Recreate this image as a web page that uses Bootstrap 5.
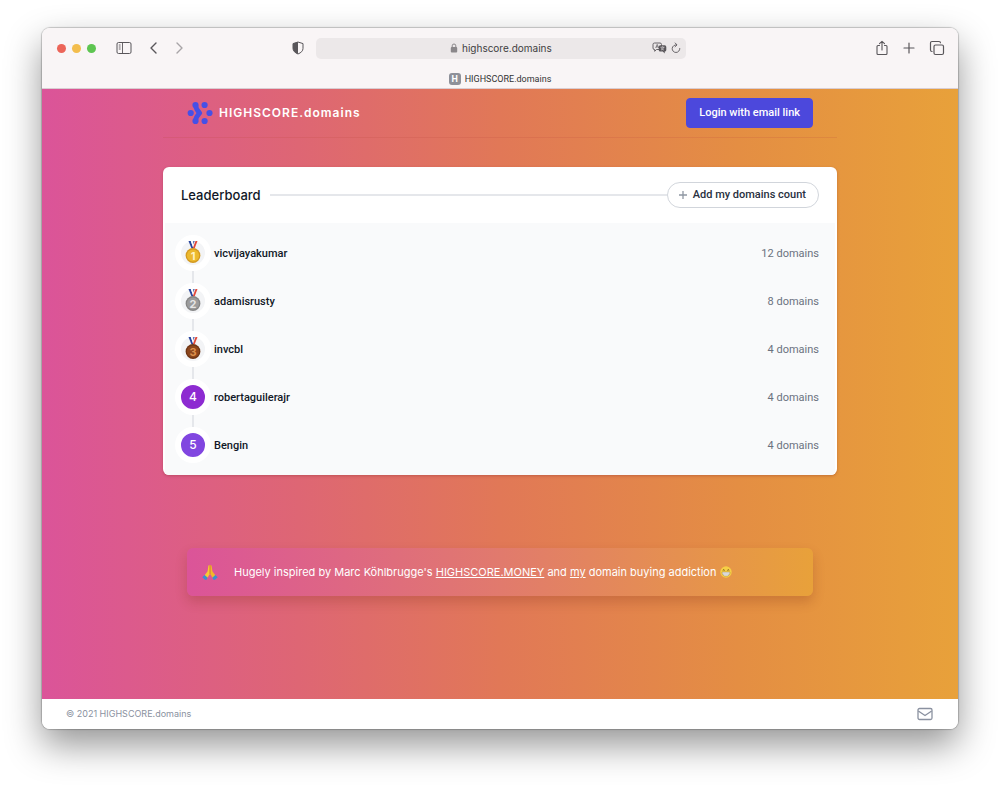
<!DOCTYPE html>
<html lang="en">
<head>
<meta charset="utf-8">
<meta name="viewport" content="width=device-width, initial-scale=1">
<title>HIGHSCORE.domains</title>
<link href="https://cdn.jsdelivr.net/npm/bootstrap@5.3.0/dist/css/bootstrap.min.css" rel="stylesheet">
<style>
  body { font-family: Roboto, "Liberation Sans", sans-serif; font-size: 11px; line-height: 16px; padding: 28px 42px 56px; background: #fff; color: #111827; }
  svg { display: block; flex: none; }
  .browser { border-radius: 8px; box-shadow: 0 0 1px 1px rgba(0,0,0,.2), 0 16px 36px rgba(0,0,0,.42); }
  .chrome { background: #f9f5f6; border-bottom: 1px solid #d9cdd2; color: #59565a; height: 61px; }
  .toolbar { height: 40px; }
  .side { flex: 1 1 0; }
  .side-left { padding-left: 15px; }
  .side-right { padding-right: 13px; }
  .light { width: 9px; height: 9px; border-radius: 50%; margin-right: 6px; }
  .light-red { background: #ec6559; }
  .light-amber { background: #f3bd4d; }
  .light-green { background: #5ec551; }
  .tool { background: none; border: 0; padding: 0; color: inherit; }
  .tool-gap { margin-left: 14px; }
  .address { flex: 0 1 370px; height: 21px; border-radius: 5px; background: #ece8e9; padding: 0 5px; }
  .address input { width: 90px; border: 0; padding: 0; background: none; color: #403e41; font-family: Inter, sans-serif; font-size: 10px; height: 20px; outline: 0; }
  .tab-row { height: 22px; font-size: 9px; color: #333; }
  .favicon { width: 12px; height: 12px; line-height: 12px; border-radius: 3px; background: #8e9099; color: #fff; font-size: 9px; }
  .page-bg { background: linear-gradient(90deg, #db5499 0%, #de6674 28%, #e17857 50%, #e48e43 76%, #e8a13a 100%); }
  .page-col { width: 100%; max-width: 674px; }
  .site-nav { height: 49px; padding: 0 24px; border-bottom: 1px solid rgba(190,70,60,.18); }
  .brand { font-family: Inter, sans-serif; font-size: 12px; font-weight: 600; letter-spacing: 1px; color: #fff; margin-left: 6px; }
  .btn-login { font-size: 11px; line-height: 16px; font-weight: 500; padding: 6px 12px; border-radius: 4px; background: #4c48dc; border: 1px solid #4c48dc; color: #fff; }
  .btn-login:hover { background: #4338ca; color: #fff; }
  .board { margin-top: 29px; border-radius: 6px; background: #fff; box-shadow: 0 1px 3px rgba(120,30,30,.3); }
  .board-head { height: 56px; padding: 0 18px; }
  .board-head h1 { font-family: Inter, sans-serif; font-size: 13px; line-height: 20px; font-weight: 500; }
  .rule { height: 2px; background: #e5e7eb; margin-left: 9px; }
  .btn-add { font-size: 11px; line-height: 16px; font-weight: 500; padding: 4px 12px 4px 9px; border: 1px solid #d1d5db; color: #283040; background: #fff; }
  .ranks { padding: 12px 16px 10px 10px; margin: 0 2px; background: #f9fafb; }
  .rail { width: 36px; }
  .medal { width: 36px; height: 36px; border: 6px solid #fff; border-radius: 50%; background: #f3f4f6; color: #fff; font-weight: 500; font-size: 12px; font-family: Inter, sans-serif; }
  .rank-four { background: #8d2bd1; }
  .rank-five { background: #8146e0; }
  .link-line { width: 2px; height: 12px; background: #e5e7eb; }
  .rank-text { height: 38px; padding-left: 3px; font-weight: 500; }
  .count { color: #6b7280; font-weight: 400; }
  .credit { font-family: Inter, sans-serif; margin: 73px 24px 32px; min-height: 48px; padding: 8px 15px; border-radius: 6px; color: #fff; font-weight: 400; background: linear-gradient(90deg, #db5499, #e17a6d 50%, #e8a13a); box-shadow: 0 6px 12px rgba(120,40,20,.24); }
  .credit a { color: #fff; }
  .page-foot { height: 30px; padding: 0 25px 0 24px; background: #fff; color: #8a91a0; font-family: Inter, sans-serif; font-size: 9px; }
</style>
</head>
<body class="min-vh-100 d-flex flex-column">
<div class="browser flex-grow-1 d-flex flex-column overflow-hidden">
  <div class="chrome">
    <div class="toolbar d-flex align-items-center">
      <div class="side side-left d-flex align-items-center">
        <span class="light light-red"></span><span class="light light-amber"></span><span class="light light-green"></span>
        <button class="tool tool-gap" aria-label="Sidebar"><svg width="16" height="14" viewBox="0 0 16 14" fill="none" stroke="currentColor"><rect x="1" y="1.500" width="14" height="11" rx="1.500"/><path d="M6.500 1.500v11M2.800 4h1.800M2.800 6h1.800M2.800 8h1.800" stroke-width=".9"/></svg></button>
        <button class="tool ms-3" aria-label="Back"><svg width="12" height="14" viewBox="0 0 12 14" fill="none" stroke="currentColor" stroke-width="1.400" stroke-linecap="round" stroke-linejoin="round"><path d="M8 2L3 7l5 5"/></svg></button>
        <button class="tool tool-gap opacity-50" aria-label="Forward"><svg width="12" height="14" viewBox="0 0 12 14" fill="none" stroke="currentColor" stroke-width="1.400" stroke-linecap="round" stroke-linejoin="round"><path d="M3 2l5 5-5 5"/></svg></button>
        <button class="tool ms-auto me-2" aria-label="Privacy report"><svg class="me-1" width="12" height="14" viewBox="0 0 12 14"><path d="M6 1L11 2.600v4.800C11 10 9 11.700 6 13 3 11.700 1 10 1 7.400V2.600z" fill="none" stroke="currentColor"/><path d="M6 1v12C3 11.700 1 10 1 7.400V2.600z" fill="currentColor"/></svg></button>
      </div>
      <div class="address d-flex align-items-center">
        <div class="side"></div>
        <label for="url" class="me-1"><svg width="8" height="10" viewBox="0 0 8 10"><rect x=".8" y="4" width="6.400" height="5.500" rx="1" fill="#8a878a"/><path d="M2.200 4.500V2.800a1.800 1.800 0 0 1 3.600 0v1.700" fill="none" stroke="#8a878a"/></svg></label>
        <input id="url" type="text" value="highscore.domains" aria-label="Address">
        <div class="side d-flex align-items-center justify-content-end gap-1">
          <button class="tool" aria-label="Translate"><svg width="15" height="12" viewBox="0 0 15 12"><path d="M2.500 1h5.500a1.500 1.500 0 0 1 1.500 1.500V6A1.500 1.500 0 0 1 8 7.500H4.500L2.700 9.300V7.500A1.500 1.500 0 0 1 1 6V2.500A1.500 1.500 0 0 1 2.500 1z" fill="none" stroke="currentColor" stroke-width=".9"/><path d="M3.700 6l1.500-3.600L6.700 6M4.200 4.900h2" fill="none" stroke="currentColor" stroke-width=".7"/><path d="M8.300 3.300h4.400a1.600 1.600 0 0 1 1.600 1.600v3a1.600 1.600 0 0 1-1.600 1.600v2L10.800 9.500H8.300a1.600 1.600 0 0 1-1.600-1.600v-3a1.600 1.600 0 0 1 1.600-1.600z" fill="currentColor"/><path d="M8.500 5.200h4M10.500 4.400v.8M9 8c1.500-.5 2.400-1.500 2.700-2.800M9.200 5.600c.5 1.200 1.300 2 2.700 2.400" fill="none" stroke="#ece8e9" stroke-width=".6"/></svg></button>
          <button class="tool" aria-label="Reload"><svg width="10" height="12" viewBox="0 0 10 12" fill="none" stroke="currentColor" stroke-width=".9" stroke-linecap="round"><path d="M8.800 6.500A3.800 3.800 0 1 1 5.500 2.900M4.200 1l1.800 1.900-1.900 1.800"/></svg></button>
        </div>
      </div>
      <div class="side side-right d-flex align-items-center justify-content-end gap-2">
        <button class="tool me-1" aria-label="Share"><svg width="14" height="16" viewBox="0 0 14 16" fill="none" stroke="currentColor" stroke-width="1.100" stroke-linecap="round" stroke-linejoin="round"><path d="M4.500 5.500H3A1 1 0 0 0 2 6.500v7a1 1 0 0 0 1 1h8a1 1 0 0 0 1-1v-7a1 1 0 0 0-1-1H9.500M7 10V1.500M4.500 3.700L7 1.300l2.500 2.400"/></svg></button>
        <button class="tool me-1" aria-label="New tab"><svg width="16" height="14" viewBox="0 0 16 14" stroke="currentColor" stroke-width="1.200" stroke-linecap="round"><path d="M8 2v10M3 7h10"/></svg></button>
        <button class="tool" aria-label="Tab overview"><svg width="16" height="16" viewBox="0 0 16 16" fill="none" stroke="currentColor" stroke-width="1.200"><rect x="5" y="5" width="9.500" height="9.500" rx="1.500"/><path d="M3.500 11.500H3A1.500 1.500 0 0 1 1.500 10V3A1.500 1.500 0 0 1 3 1.500h7A1.500 1.500 0 0 1 11.500 3v.3"/></svg></button>
      </div>
    </div>
    <div class="tab-row d-flex align-items-center justify-content-center gap-1">
      <span class="favicon fw-bold text-center">H</span><span>HIGHSCORE.domains</span>
    </div>
  </div>

  <div class="page-bg flex-grow-1 d-flex flex-column align-items-center">
    <header class="page-col site-nav d-flex align-items-center justify-content-between">
      <a href="#" class="d-flex align-items-center text-decoration-none">
        <svg width="26" height="26" viewBox="0 0 26 26" fill="#4650e6"><circle cx="8.500" cy="5" r="3.100"/><circle cx="17.600" cy="5" r="3.100"/><circle cx="3.700" cy="13" r="3.100"/><circle cx="22.500" cy="13" r="3.100"/><circle cx="8.500" cy="21" r="3.100"/><circle cx="17.600" cy="21" r="3.100"/><path d="M8.500 5Q9 9.500 12.700 13 9 16.500 8.500 21" fill="none" stroke="#4650e6" stroke-width="4.800" stroke-linejoin="round"/></svg>
        <span class="brand">HIGHSCORE.domains</span>
      </a>
      <button class="btn btn-login">Login with email link</button>
    </header>

    <main class="page-col">
      <section class="board overflow-hidden">
        <div class="board-head d-flex align-items-center">
          <h1 class="m-0">Leaderboard</h1>
          <div class="rule flex-grow-1"></div>
          <button class="btn btn-add rounded-pill d-flex align-items-center"><svg class="me-1" width="12" height="12" viewBox="0 0 12 12" stroke="#8f97a3" stroke-width="1.300"><path d="M6 2v8M2 6h8"/></svg>Add my domains count</button>
        </div>
        <ol class="ranks list-unstyled">
          <li class="d-flex">
            <div class="rail d-flex flex-column align-items-center">
              <span class="medal d-flex align-items-center justify-content-center"><svg width="16" height="24" viewBox="0 0 16 24"><path d="M3.500 0h2.300L8.500 7.500H6.500z" fill="#27449c"/><path d="M5.800 0h1.200l1.500 4.500-.5 1.700z" fill="#fff"/><path d="M10.500 0h2L9.600 7.500H7.700z" fill="#e2493b"/><path d="M8.300 0h1.300L8.300 3.500z" fill="#27449c"/><circle cx="8" cy="14.500" r="7.400" fill="#d39a20"/><circle cx="8" cy="14.500" r="6.100" fill="#ecb92e"/><text x="8" y="18.500" text-anchor="middle" font-size="11" font-weight="700" fill="#fff3c4">1</text></svg></span>
              <span class="link-line"></span>
            </div>
            <div class="rank-text flex-grow-1 d-flex align-items-center justify-content-between"><span>vicvijayakumar</span><span class="count">12 domains</span></div>
          </li>
          <li class="d-flex">
            <div class="rail d-flex flex-column align-items-center">
              <span class="medal d-flex align-items-center justify-content-center"><svg width="16" height="24" viewBox="0 0 16 24"><path d="M3.500 0h2.300L8.500 7.500H6.500z" fill="#27449c"/><path d="M5.800 0h1.200l1.500 4.500-.5 1.700z" fill="#fff"/><path d="M10.500 0h2L9.600 7.500H7.700z" fill="#e2493b"/><path d="M8.300 0h1.300L8.300 3.500z" fill="#27449c"/><circle cx="8" cy="14.500" r="7.400" fill="#858585"/><circle cx="8" cy="14.500" r="6.100" fill="#9c9c9c"/><text x="8" y="18.500" text-anchor="middle" font-size="11" font-weight="700" fill="#e6e6e6">2</text></svg></span>
              <span class="link-line"></span>
            </div>
            <div class="rank-text flex-grow-1 d-flex align-items-center justify-content-between"><span>adamisrusty</span><span class="count">8 domains</span></div>
          </li>
          <li class="d-flex">
            <div class="rail d-flex flex-column align-items-center">
              <span class="medal d-flex align-items-center justify-content-center"><svg width="16" height="24" viewBox="0 0 16 24"><path d="M3.500 0h2.300L8.500 7.500H6.500z" fill="#27449c"/><path d="M5.800 0h1.200l1.500 4.500-.5 1.700z" fill="#fff"/><path d="M10.500 0h2L9.600 7.500H7.700z" fill="#e2493b"/><path d="M8.300 0h1.300L8.300 3.500z" fill="#27449c"/><circle cx="8" cy="14.500" r="7.400" fill="#6e3514"/><circle cx="8" cy="14.500" r="6.100" fill="#8c461c"/><text x="8" y="18.500" text-anchor="middle" font-size="11" font-weight="700" fill="#dc8f4c">3</text></svg></span>
              <span class="link-line"></span>
            </div>
            <div class="rank-text flex-grow-1 d-flex align-items-center justify-content-between"><span>invcbl</span><span class="count">4 domains</span></div>
          </li>
          <li class="d-flex">
            <div class="rail d-flex flex-column align-items-center">
              <span class="medal rank-four d-flex align-items-center justify-content-center">4</span>
              <span class="link-line"></span>
            </div>
            <div class="rank-text flex-grow-1 d-flex align-items-center justify-content-between"><span>robertaguilerajr</span><span class="count">4 domains</span></div>
          </li>
          <li class="d-flex">
            <div class="rail d-flex flex-column align-items-center">
              <span class="medal rank-five d-flex align-items-center justify-content-center">5</span>
            </div>
            <div class="rank-text flex-grow-1 d-flex align-items-center justify-content-between"><span>Bengin</span><span class="count">4 domains</span></div>
          </li>
        </ol>
      </section>

      <div class="credit d-flex align-items-center">
        <svg class="me-3" width="16" height="16" viewBox="0 0 16 16"><path d="M7.800 1C6.800.8 6.300 1.500 6.200 3L5.600 7.200 2.500 11.500l2.700 2.700L7.800 10z" fill="#f9c933"/><path d="M8.200 1c1-.2 1.500.5 1.600 2l.6 4.200 3.100 4.300-2.700 2.700L8.200 10z" fill="#f3b72a"/><path d="M8 1v9" stroke="#c98712" stroke-width=".7"/><path d="M2.700 11L.3 13.200 3 15.800h1.500L5.700 13.700zM13.300 11l2.400 2.200L13 15.800h-1.500L10.300 13.700z" fill="#3a90d0"/></svg>
        <span>Hugely inspired by Marc Köhlbrugge's <a href="#">HIGHSCORE.MONEY</a> and <a href="#">my</a> domain buying addiction</span>
        <svg class="ms-1" width="12" height="12" viewBox="0 0 12 12"><circle cx="6" cy="6" r="5.700" fill="#f6cf45"/><path d="M2.800 4.300q.9-1 1.800 0M7.400 4.300q.9-1 1.800 0" fill="none" stroke="#5b3b12" stroke-width=".9"/><path d="M2 6h8c0 2.600-1.600 4.200-4 4.200S2 8.600 2 6z" fill="#f4f4f4" stroke="#9a7a34" stroke-width=".5"/><path d="M2.300 8h7.400M4 6v3.500M6 6v4M8 6v3.500" stroke="#aaa" stroke-width=".4"/></svg>
      </div>
    </main>
  </div>

  <footer class="page-foot d-flex align-items-center justify-content-between">
    <span>© 2021 HIGHSCORE.domains</span>
    <a href="#" aria-label="Email" class="text-reset"><svg width="16" height="14" viewBox="0 0 16 14" fill="none" stroke="currentColor" stroke-width="1.300" stroke-linejoin="round"><rect x="1" y="1.500" width="14" height="11" rx="1.500"/><path d="M1.300 4L8 8.500 14.700 4"/></svg></a>
  </footer>
</div>
<script src="https://cdn.jsdelivr.net/npm/bootstrap@5.3.0/dist/js/bootstrap.bundle.min.js"></script>
</body>
</html>
